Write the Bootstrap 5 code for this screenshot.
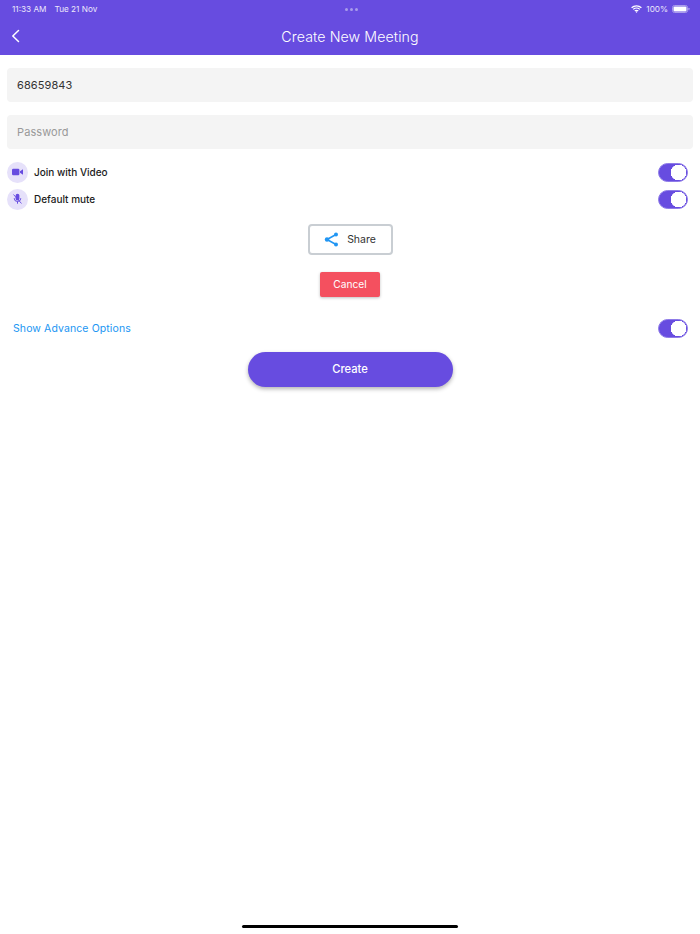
<!DOCTYPE html>
<html lang="en">
<head>
  <meta charset="UTF-8">
  <title>Create New Meeting</title>
  <link rel="stylesheet" href="https://cdn.jsdelivr.net/npm/bootstrap@5.3.0/dist/css/bootstrap.min.css">
  <style>
    body { font-family: Inter, "Liberation Sans", sans-serif; background: #fff; height: 934px; overflow: hidden; position: relative; }
    .app-header { background: #674ce0; height: 55px; color: #fff; }
    .status-row { display: grid; grid-template-columns: 1fr auto 1fr; height: 17px; padding: 1px 10px 0 12px; font-size: 8.2px; align-items: center; color: #ece8fb; }
    .status-dots { display: flex; gap: 2px; }
    .status-dots i { width: 3px; height: 3px; border-radius: 50%; background: #a99ceb; }
    .nav-row { height: 38px; position: relative; }
    .nav-title { font-size: 14.2px; letter-spacing: .1px; font-weight: 300; padding-top: 1px; }
    .page-body { padding: 13px 7px 0; }
    .meeting-input.form-control { height: 33.5px; background: #f4f4f4; border: 0; border-radius: 4px; font-size: 11px; padding: 0 10px; color: #333; letter-spacing: .1px; box-shadow: none; }
    .meeting-input::placeholder { color: #999; }
    .input-gap { margin-bottom: 13.5px; }
    .option-list { margin-top: 10px; }
    .option-row { height: 27px; }
    .round-icon { width: 21px; height: 21px; border-radius: 50%; background: #e6e1fa; }
    .option-label { font-size: 10px; font-weight: 500; color: #1c1c1c; margin-left: 6px; }
    .form-switch.toggle-wrap { padding: 0; margin: 0; min-height: 0; line-height: 0; }
    .form-switch.toggle-wrap .form-check-input { width: 30px; height: 19px; margin: 0 5.5px 0 0; float: none; background-color: #674ce0; border: 1px solid #8f7ce8; box-shadow: none; background-size: auto; background-position: 0 0; background-image: radial-gradient(circle 8px at calc(100% - 8.5px) 50%, #fff 96%, transparent 100%); }
    .share-btn.btn { width: 85px; height: 31px; background: #fff; border: 2px solid #c9ced3; border-radius: 4px; font-size: 10.5px; color: #333; padding: 0; gap: 8px; margin-top: 11.5px; }
    .share-btn span { padding-top: 1px; }
    .cancel-btn.btn { width: 60px; height: 25px; background: #f4505f; border: 0; border-radius: 2px; color: #fff; font-size: 10.2px; padding: 0; margin-top: 17px; box-shadow: 0 1px 3px rgba(0,0,0,.25); }
    .advance-row { margin-top: 21.5px; }
    .advance-link { font-size: 10.5px; color: #2196f3; text-decoration: none; margin-left: 6px; letter-spacing: .1px; padding-top: 1px; }
    .create-wrap { margin-top: 14px; }
    .create-btn.btn { width: 205px; height: 35px; background: #674ce0; border: 0; border-radius: 18px; color: #fff; font-size: 11.2px; font-weight: 500; padding: 1px 0 0; box-shadow: 0 2px 4px rgba(0,0,0,.3); }
    .home-bar { position: absolute; left: 242px; top: 925px; width: 216px; height: 3px; border-radius: 2px; background: #000; }
  </style>
</head>
<body>

  <div class="app-header">
    <div class="status-row">
      <div class="d-flex gap-2"><span>11:33 AM</span><span>Tue 21 Nov</span></div>
      <div class="status-dots"><i></i><i></i><i></i></div>
      <div class="d-flex justify-content-end align-items-center gap-1">
        <svg width="11" height="8" viewBox="0 0 11 8" fill="none" stroke="#fff" stroke-width="1.3"><path d="M.6 2.8a7 7 0 0 1 9.8 0M2.2 4.4a4.8 4.8 0 0 1 6.6 0M3.8 6a2.4 2.4 0 0 1 3.4 0"/><circle cx="5.5" cy="7" r=".7" fill="#fff" stroke="none"/></svg>
        <span>100%</span>
        <svg width="18" height="8" viewBox="0 0 18 8"><rect x=".5" y=".5" width="15" height="7" rx="2" fill="none" stroke="#a99ceb"/><rect x="1.5" y="1.5" width="13" height="5" rx="1" fill="#fff"/><rect x="16.3" y="2.7" width="1.2" height="2.6" rx=".6" fill="#a99ceb"/></svg>
      </div>
    </div>
    <div class="nav-row d-flex align-items-center justify-content-center">
      <a class="position-absolute start-0 ps-2 d-flex" href="#">
        <svg width="16" height="16" viewBox="0 0 16 16" fill="none" stroke="#fff" stroke-width="1.5" stroke-linecap="round" stroke-linejoin="round"><path d="M10.5 2.5 4.8 8l5.7 5.5"/></svg>
      </a>
      <span class="nav-title">Create New Meeting</span>
    </div>
  </div>

  <div class="page-body">
    <input type="text" class="form-control meeting-input input-gap" value="68659843">
    <input type="text" class="form-control meeting-input" placeholder="Password">

    <div class="option-list">
      <div class="option-row d-flex align-items-center justify-content-between">
        <div class="d-flex align-items-center">
          <span class="round-icon d-flex align-items-center justify-content-center">
            <svg width="11" height="8" viewBox="0 0 11 8" fill="#674ce0"><rect y=".8" width="7.4" height="6.4" rx="1.2"/><path d="m8 3.2 3-2v5.6l-3-2z"/></svg>
          </span>
          <span class="option-label">Join with Video</span>
        </div>
        <div class="form-check form-switch toggle-wrap"><input class="form-check-input" type="checkbox" role="switch" checked></div>
      </div>
      <div class="option-row d-flex align-items-center justify-content-between">
        <div class="d-flex align-items-center">
          <span class="round-icon d-flex align-items-center justify-content-center">
            <svg width="11" height="12" viewBox="0 0 11 12" fill="none"><rect x="3.6" y=".8" width="3.8" height="6.6" rx="1.9" fill="#674ce0"/><path d="M2.2 5.2a3.3 3.3 0 0 0 6.6 0M5.5 8.5v2.2" stroke="#674ce0"/><path d="m1.5 1.5 8 9" stroke="#674ce0" stroke-width=".9"/></svg>
          </span>
          <span class="option-label">Default mute</span>
        </div>
        <div class="form-check form-switch toggle-wrap"><input class="form-check-input" type="checkbox" role="switch" checked></div>
      </div>
    </div>

    <div class="d-flex flex-column align-items-center">
      <button type="button" class="btn share-btn d-flex align-items-center justify-content-center">
        <svg width="15" height="15" viewBox="0 0 15 15" fill="#2196f3" stroke="#2196f3"><path d="M12 2.5 3 7.5l9 5" fill="none" stroke-width="1.6"/><circle cx="12" cy="2.5" r="2" stroke="none"/><circle cx="3" cy="7.5" r="2.2" stroke="none"/><circle cx="12" cy="12.5" r="2" stroke="none"/></svg>
        <span>Share</span>
      </button>
      <button type="button" class="btn cancel-btn">Cancel</button>
    </div>

    <div class="advance-row d-flex align-items-center justify-content-between">
      <a href="#" class="advance-link">Show Advance Options</a>
      <div class="form-check form-switch toggle-wrap"><input class="form-check-input" type="checkbox" role="switch" checked></div>
    </div>

    <div class="create-wrap text-center">
      <button type="button" class="btn create-btn">Create</button>
    </div>
  </div>

  <div class="home-bar"></div>

</body>
</html>
